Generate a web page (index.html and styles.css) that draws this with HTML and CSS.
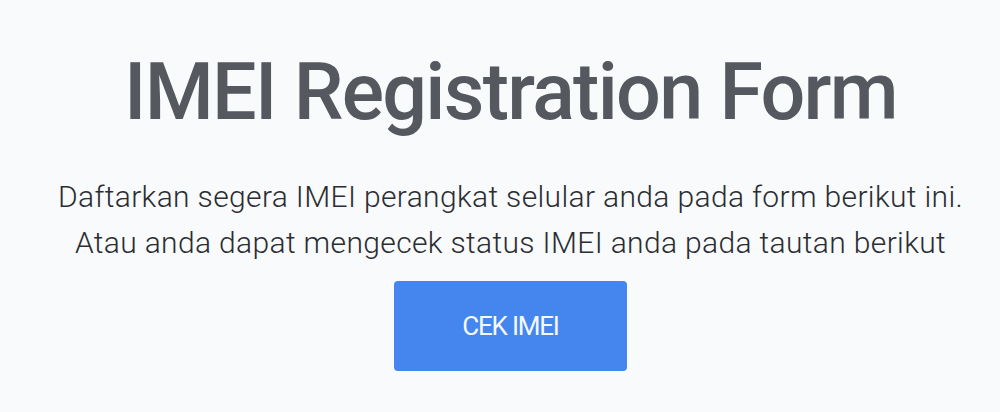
FILE: index.html
```html
<!DOCTYPE html>
<html>
<head>
<meta charset="utf-8">
<link rel="stylesheet" href="styles.css">
</head>
<body>
<main class="hero">
  <h1 class="title">IMEI Registration Form</h1>
  <p class="lead">Daftarkan segera IMEI perangkat selular anda pada form berikut ini.<br>Atau anda dapat mengecek status IMEI anda pada tautan berikut</p>
  <a class="btn" href="#">CEK IMEI</a>
</main>
</body>
</html>
```
FILE: styles.css
```css
html, body {
  margin: 0;
  padding: 0;
  background: #f9fafb;
}
body {
  width: 1000px;
  height: 412px;
  overflow: hidden;
  font-family: Roboto, "Noto Sans", sans-serif;
}
.hero {
  display: flex;
  flex-direction: column;
  align-items: center;
  padding-top: 44px;
  padding-left: 21px;
}
.title {
  margin: 0;
  font-size: 79px;
  font-weight: 500;
  line-height: 96px;
  color: #55595f;
  letter-spacing: -1.7px;
}
.lead {
  margin: 34px 0 0;
  font-size: 30px;
  font-weight: 300;
  line-height: 46px;
  color: #2a2d32;
  text-align: center;
  letter-spacing: 0.35px;
}
.btn {
  margin-top: 15px;
  width: 233px;
  height: 90px;
  display: flex;
  align-items: center;
  justify-content: center;
  background: #4585ee;
  border-radius: 4px;
  color: #f4f9ff;
  text-decoration: none;
  font-size: 26px;
  letter-spacing: -1.2px;
}
```
